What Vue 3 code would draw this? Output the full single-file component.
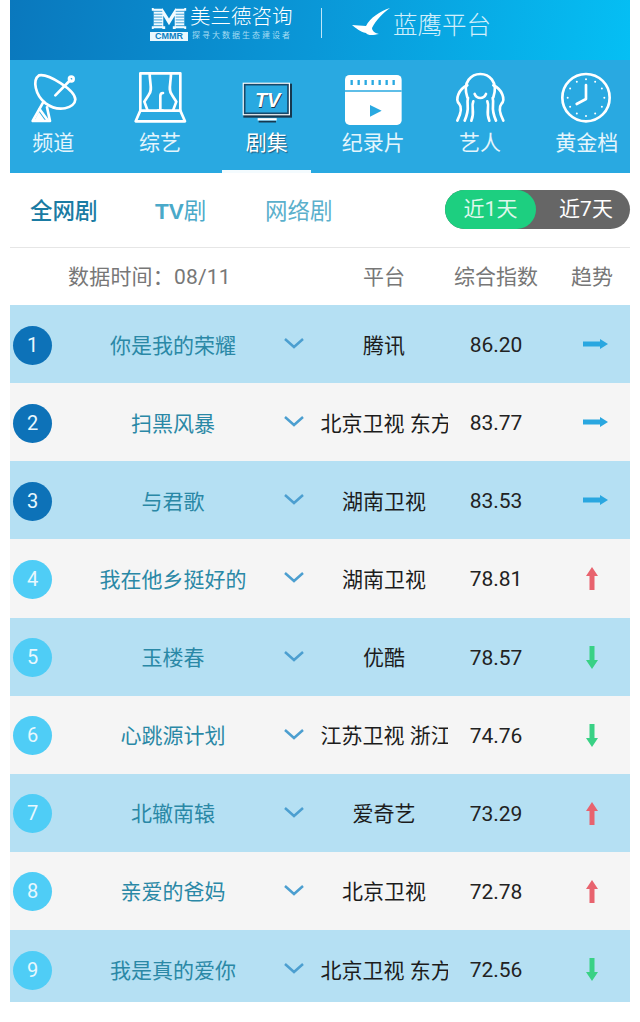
<script setup>
const navItems = [
  { key: 'dish', label: '频道' },
  { key: 'stage', label: '综艺' },
  { key: 'tv', label: '剧集', active: true },
  { key: 'film', label: '纪录片' },
  { key: 'artist', label: '艺人' },
  { key: 'clock', label: '黄金档' }
]

const rows = [
  { n: 1, title: '你是我的荣耀', platform: '腾讯', score: '86.20', trend: 'flat' },
  { n: 2, title: '扫黑风暴', platform: '北京卫视 东方卫视', score: '83.77', trend: 'flat' },
  { n: 3, title: '与君歌', platform: '湖南卫视', score: '83.53', trend: 'flat' },
  { n: 4, title: '我在他乡挺好的', platform: '湖南卫视', score: '78.81', trend: 'up' },
  { n: 5, title: '玉楼春', platform: '优酷', score: '78.57', trend: 'down' },
  { n: 6, title: '心跳源计划', platform: '江苏卫视 浙江卫视', score: '74.76', trend: 'down' },
  { n: 7, title: '北辙南辕', platform: '爱奇艺', score: '73.29', trend: 'up' },
  { n: 8, title: '亲爱的爸妈', platform: '北京卫视', score: '72.78', trend: 'up' },
  { n: 9, title: '我是真的爱你', platform: '北京卫视 东方卫视', score: '72.56', trend: 'down' }
]

const ticks = Array.from({ length: 12 }, (_, i) => {
  const a = (i * Math.PI) / 6
  return { x: 84 + 55 * Math.sin(a), y: 83 - 55 * Math.cos(a) }
})
const filmTicks = [20, 41, 62, 83, 104, 125, 146]
const mBars = [0, 3, 6, 9, 12, 15, 18, 21]
</script>

<template>
  <div class="page">
    <header class="brand">
      <div class="mark">
        <svg class="m-logo" viewBox="0 0 36 22" aria-hidden="true">
          <path class="m-solid" d="M0 0h11l7 11 7-11h11v3h-2v16h2v3H22v-3h2V8l-6 10-6-10v11h2v3H0v-3h2V3H0z" />
          <g class="m-cuts">
            <path v-for="y in mBars" :key="y" :d="`M2 ${y + 0.5}h9M25 ${y + 0.5}h9`" />
          </g>
        </svg>
        <span class="cmmr">CMMR</span>
      </div>
      <div class="mark-text">
        <span class="mark-name">美兰德咨询</span>
        <span class="mark-tag">探寻大数据生态建设者</span>
      </div>
      <span class="brand-divider"></span>
      <svg class="bird" viewBox="0 0 38 29" aria-hidden="true">
        <path d="M38 0C28 3 18 10 14 18 10 18 4 17 0 17c4 3 8 7 14 8 2 3 8 2 13 1-5-1-7-4-7-6C24 12 32 4 38 0z" />
      </svg>
      <span class="platform-name">蓝鹰平台</span>
    </header>

    <nav class="nav">
      <div class="nav-grid">
        <div v-for="item in navItems" :key="item.key" class="nav-item" :class="{ active: item.active }">
          <svg class="nav-icon" viewBox="0 0 170 170" aria-hidden="true">
            <g v-if="item.key === 'dish'" class="line">
              <path d="M42 16C70 10 150 60 151 88 150 115 100 128 62 100 30 75 22 30 42 16z" />
              <path d="M91 76l45-46" />
              <circle cx="139" cy="27" r="7" />
              <path d="M54 98L23 153h52L66 112" />
              <path d="M44 118l24 33" />
              <path class="solid" d="M29 150l13-24 17 24z" />
            </g>
            <g v-else-if="item.key === 'stage'" class="line">
              <path d="M25 122V10h120v112" />
              <path d="M25 122L11 154h148l-14-32z" />
              <path d="M53 10c0 30 10 50-3 65l-13 20 10 27" />
              <path d="M117 10c0 30-10 50 3 65l13 20-10 27" />
              <path d="M85 122V78c0-6 4-9 8-9" />
              <path d="M78 122h14" />
            </g>
            <g v-else-if="item.key === 'tv'">
              <rect class="tv-shadow" x="16" y="41" width="146" height="102" />
              <rect class="tv-frame" x="14" y="38" width="142" height="98" />
              <rect class="tv-inner" x="20" y="44" width="130" height="86" />
              <text class="tv-shade" x="91" y="113">TV</text>
              <text class="tv-text" x="89" y="111">TV</text>
              <path class="tv-stand" d="M59 148h57" />
              <path class="tv-stand-dark" d="M62 155h52" />
            </g>
            <g v-else-if="item.key === 'film'">
              <rect class="film" x="0" y="15" width="170" height="150" rx="14" />
              <path class="film-line" d="M0 63h170" />
              <path v-for="x in filmTicks" :key="x" class="film-tick" :d="`M${x} 30v15`" />
              <path class="film-play" d="M75 105l35 17-35 18z" />
            </g>
            <g v-else-if="item.key === 'artist'" class="line">
              <path d="M46 82C30 34 60 12 85 12s55 22 39 70" />
              <path d="M68 72c7 16 27 16 34 0" />
              <path d="M46 46C20 58 8 88 22 102c10 12 2 34-6 50" />
              <path d="M124 46c26 12 38 42 24 56-10 12-2 34 6 50" />
              <path d="M48 84c-6 22 8 28-10 68" />
              <path d="M122 84c6 22-8 28 10 68" />
              <path d="M64 94c-8 18 6 30-6 58" />
              <path d="M106 94c8 18-6 30 6 58" />
            </g>
            <g v-else class="line">
              <circle cx="84" cy="83" r="71" />
              <circle v-for="(t, i) in ticks" :key="i" class="solid" :cx="t.x" :cy="t.y" r="3" />
              <path d="M84 45v42L56 102" />
            </g>
          </svg>
          <span class="nav-label">{{ item.label }}</span>
        </div>
      </div>
    </nav>

    <section class="tabs">
      <span class="tab current">全网剧</span>
      <span class="tab tab-tv"><b>TV</b>剧</span>
      <span class="tab tab-web">网络剧</span>
      <div class="toggle">
        <span class="toggle-on">近1天</span>
        <span class="toggle-off">近7天</span>
      </div>
    </section>

    <section class="table-head">
      <span class="date">数据时间：08/11</span>
      <span class="center">平台</span>
      <span class="center">综合指数</span>
      <span class="center trend-head">趋势</span>
    </section>

    <section class="table">
      <div v-for="row in rows" :key="row.n" class="row">
        <span class="rank" :class="{ top: row.n <= 3 }">{{ row.n }}</span>
        <span class="title">{{ row.title }}</span>
        <svg class="chevron" viewBox="0 0 22 12" aria-hidden="true"><path d="M2 2l9 8 9-8" /></svg>
        <div class="platform"><span class="platform-inner">{{ row.platform }}</span></div>
        <span class="score">{{ row.score }}</span>
        <div class="trend">
          <svg v-if="row.trend === 'flat'" class="arrow flat" viewBox="0 0 30 26" aria-hidden="true">
            <path d="M4 10.500h17V8l8 5-8 5v-2.500H4z" />
          </svg>
          <svg v-else-if="row.trend === 'up'" class="arrow up" viewBox="0 0 30 26" aria-hidden="true">
            <path d="M15 2l6 9h-3.500v14h-5V11H9z" />
          </svg>
          <svg v-else class="arrow down" viewBox="0 0 30 26" aria-hidden="true">
            <path d="M15 25l6-9h-3.500V2h-5v14H9z" />
          </svg>
        </div>
      </div>
    </section>
  </div>
</template>

<style scoped>
.page {
  box-sizing: border-box;
  width: 640px;
  height: 1022px;
  padding: 0 10px;
  background: #fff;
  overflow: hidden;
  font-family: Roboto, "Noto Sans CJK SC", sans-serif;
}

.brand {
  box-sizing: border-box;
  height: 60px;
  padding-left: 140px;
  display: flex;
  align-items: flex-start;
  background: linear-gradient(100deg, #0a78bd 0%, #0a98d8 50%, #05bff4 100%);
  color: #fff;
}
.mark {
  margin-top: 8px;
  width: 38px;
  display: flex;
  flex-direction: column;
  align-items: center;
  gap: 3px;
}
.m-logo { width: 36px; height: 21px; }
.m-solid { fill: #f2fbff; }
.m-cuts path { stroke: #0a88cb; stroke-width: 0.800; fill: none; }
.cmmr {
  width: 38px;
  height: 9px;
  background: #eaf8fe;
  color: #0a7fc2;
  font: 700 9px/9px "Liberation Sans", sans-serif;
  text-align: center;
}
.mark-text {
  margin: 5px 0 0 2px;
  width: 104px;
  display: flex;
  flex-direction: column;
}
.mark-name {
  font-size: 20.500px;
  line-height: 25px;
  font-weight: 300;
  white-space: nowrap;
}
.mark-tag {
  font-size: 8px;
  line-height: 10px;
  margin: 1px 0 0 2px;
  color: #a5dcf3;
  white-space: nowrap;
  letter-spacing: 2px;
}
.brand-divider {
  width: 1px;
  height: 30px;
  margin: 8px 0 0 27px;
  background: #bfe6f8;
}
.bird {
  width: 38px;
  height: 29px;
  margin: 8px 0 0 30px;
  fill: #fff;
}
.platform-name {
  margin: 11px 0 0 3px;
  font-size: 24.500px;
  line-height: 30px;
  font-weight: 300;
  color: #d2effb;
  white-space: nowrap;
}

.nav {
  height: 113px;
  background: #29a9e1;
  overflow: hidden;
}
.nav-grid {
  width: 640px;
  margin-left: -10px;
  height: 100%;
  display: grid;
  grid-template-columns: repeat(6, 1fr);
}
.nav-item {
  position: relative;
  display: flex;
  flex-direction: column;
  align-items: center;
  padding-top: 10px;
  color: #e4f5fc;
}
.nav-item.active::after {
  content: "";
  position: absolute;
  left: 9px;
  right: 9px;
  bottom: 0;
  height: 3px;
  background: #f4fbfe;
}
.nav-icon {
  width: 56.670px;
  height: 56.670px;
  overflow: visible;
}
.nav-label {
  margin-top: 3px;
  font-size: 21px;
  line-height: 26px;
  white-space: nowrap;
}
.active .nav-label {
  text-shadow: 1px 1px 1px #1d5c80;
  color: #fff;
}
.line {
  fill: none;
  stroke: #fff;
  stroke-width: 8;
  stroke-linecap: round;
  stroke-linejoin: round;
}
.solid { fill: #fff; stroke: none; }
.tv-shadow { fill: #17384f; }
.tv-frame { fill: #fff; }
.tv-inner { fill: #29a9e1; stroke: #17486a; stroke-width: 5; }
.tv-text,
.tv-shade {
  font: italic 700 60px "Liberation Sans", sans-serif;
  text-anchor: middle;
}
.tv-text { fill: #fff; }
.tv-shade { fill: #17384f; }
.tv-stand { stroke: #fff; stroke-width: 7; fill: none; }
.tv-stand-dark { stroke: #17384f; stroke-width: 5; fill: none; }
.film { fill: #fff; }
.film-line { stroke: #29a9e1; stroke-width: 4; fill: none; }
.film-tick { stroke: #29a9e1; stroke-width: 7; fill: none; }
.film-play { fill: #29a9e1; }

.tabs {
  box-sizing: border-box;
  height: 75px;
  padding: 0 0 3px 20px;
  display: flex;
  align-items: center;
  border-bottom: 1px solid #e6e6e6;
}
.tab {
  font-size: 22.500px;
  white-space: nowrap;
}
.tab b { font-weight: 700; font-family: "Liberation Sans", sans-serif; }
.current { color: #1a7ba3; font-weight: 500; width: 125px; }
.tab-tv { color: #4aa9c9; width: 110px; }
.tab-web { color: #5bb0cc; }
.toggle {
  margin-left: auto;
  width: 185px;
  height: 39px;
  margin-top: 2px;
  border-radius: 20px;
  background: #666;
  display: flex;
  color: #fff;
  font-size: 21px;
  line-height: 39px;
}
.toggle-on {
  width: 91px;
  border-radius: 20px;
  background: #1dcf80;
  color: #dff7ec;
  text-align: center;
}
.toggle-off {
  flex: 1;
  text-align: center;
  padding-left: 6px;
}

.table-head,
.row {
  display: grid;
  grid-template-columns: 64px 198px 44px 136px 88px 90px;
  align-items: center;
}
.table-head {
  height: 57px;
  color: #777;
  font-size: 21px;
  padding-bottom: 3px;
  box-sizing: border-box;
}
.date {
  grid-column: 1 / 4;
  padding-left: 58px;
  white-space: nowrap;
  letter-spacing: 0.200px;
}
.center { text-align: center; white-space: nowrap; }
.trend-head { padding-left: 14px; }

.row {
  box-sizing: border-box;
  height: 78.125px;
  padding-top: 2px;
  background: #f5f5f5;
  font-size: 21px;
}
.row:nth-child(odd) { background: #b5e0f3; }
.row:last-child { height: 72px; padding-top: 8px; }
.rank {
  width: 39px;
  height: 39px;
  margin-left: 3px;
  border-radius: 50%;
  background: #4fcdf6;
  color: #e8f8fe;
  text-align: center;
  line-height: 39px;
  font-size: 20px;
}
.rank.top { background: #0d72b8; }
.title {
  text-align: center;
  color: #2a88a6;
  white-space: nowrap;
  margin-bottom: 3px;
}
.chevron {
  width: 22px;
  height: 12px;
  justify-self: center;
  fill: none;
  stroke: #4c9fd0;
  stroke-width: 2.500;
  margin-bottom: 4px;
}
.platform {
  width: 127px;
  justify-self: center;
  overflow: hidden;
  display: flex;
  justify-content: safe center;
  color: #1c1c1c;
  margin-bottom: 3px;
}
.platform-inner { white-space: nowrap; flex: none; }
.score {
  text-align: center;
  color: #222;
  font-size: 21px;
}
.trend {
  padding-left: 14px;
  display: flex;
  justify-content: center;
}
.arrow { width: 30px; height: 26px; margin-bottom: 2px; }
.flat { fill: #2aa7e0; margin-left: 4px; }
.up { fill: #e8636e; }
.down { fill: #39d185; }
</style>
